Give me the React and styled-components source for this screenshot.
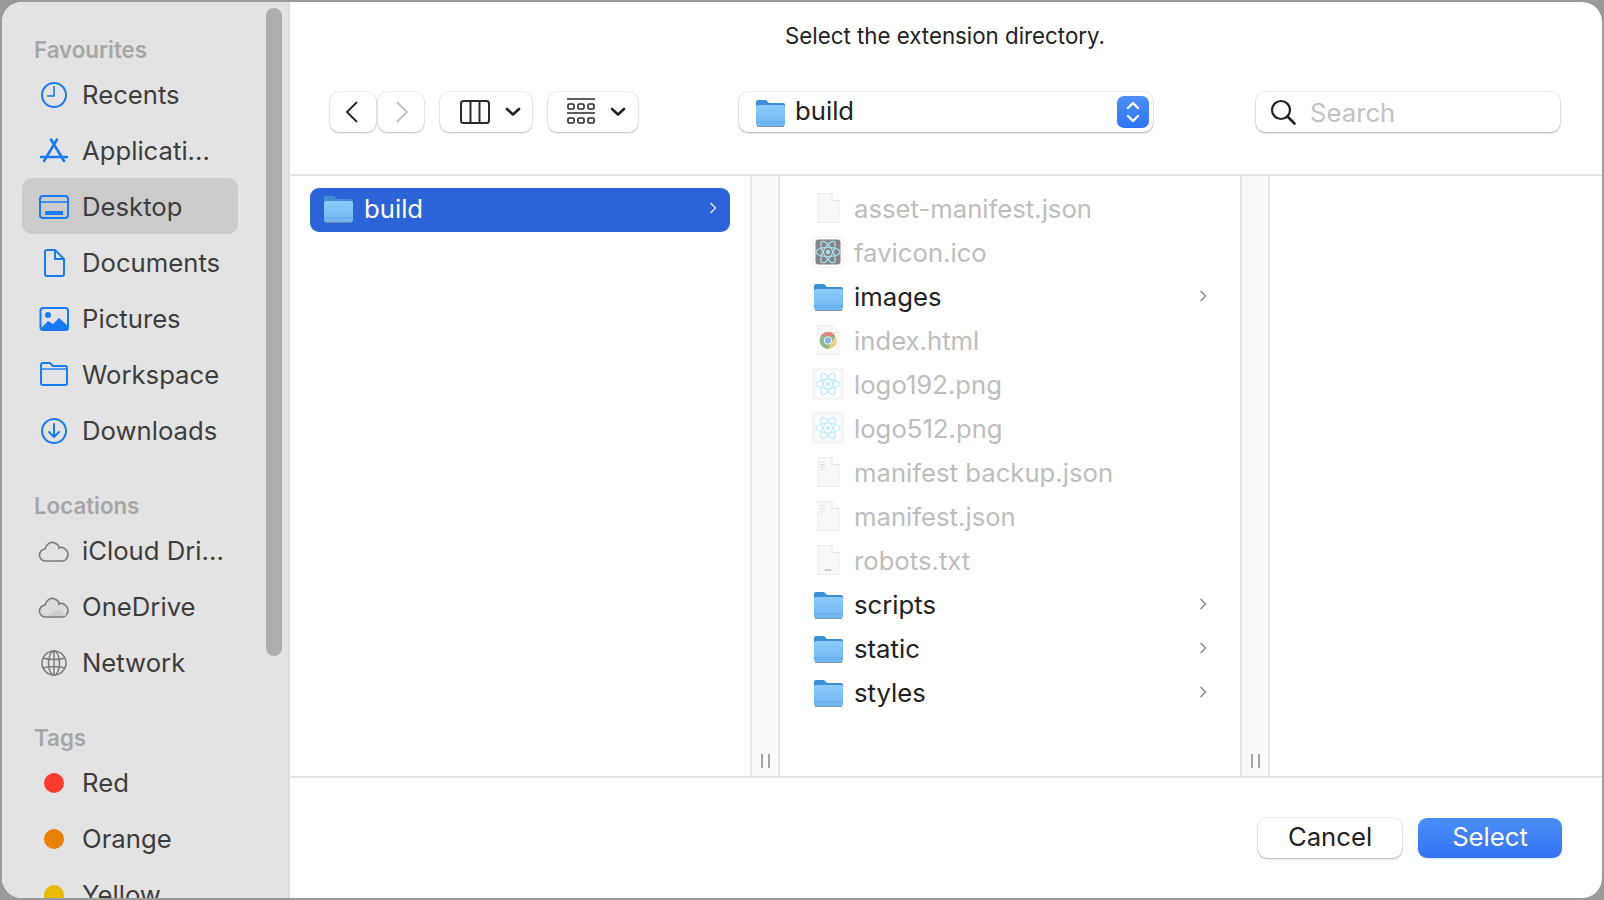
import React from 'react';
import styled, { createGlobalStyle } from 'styled-components';

const GlobalStyle = createGlobalStyle`
  html, body {
    margin: 0;
    padding: 0;
    background: #9a9a9a;
    overflow: hidden;
  }
  * { box-sizing: border-box; }
`;

const Desktop = styled.div`
  width: 1604px;
  height: 900px;
  padding: 2px;
  background: #9a9a9a;
  font-family: Inter, "Liberation Sans", sans-serif;
`;

const Dialog = styled.div`
  width: 1600px;
  height: 896px;
  display: flex;
  border-radius: 20px;
  overflow: hidden;
  background: #fff;
`;

const Sidebar = styled.aside`
  position: relative;
  width: 288px;
  flex: none;
  padding: 30px 0 0 20px;
  background: #e3e3e3;
  border-right: 2px solid #dcdcdc;
  overflow: hidden;
`;

const Scrollbar = styled.div`
  position: absolute;
  top: 6px;
  left: 264px;
  width: 16px;
  height: 648px;
  border-radius: 8px;
  background: #adadad;
`;

const SectionLabel = styled.div`
  height: 34px;
  margin-top: ${(p) => (p.$first ? 0 : 30)}px;
  padding-left: 12px;
  font-size: 22.3px;
  font-weight: 600;
  line-height: 36px;
  color: #a6a6a6;
`;

const SideRow = styled.div`
  width: 216px;
  height: 56px;
  display: flex;
  align-items: center;
  gap: 12px;
  padding-left: 16px;
  border-radius: 10px;
  background: ${(p) => (p.$active ? '#cbcbcb' : 'transparent')};
  font-size: 25.7px;
  color: #3d3d3d;
  white-space: nowrap;
`;

const SideIcon = styled.svg`
  width: 32px;
  height: 32px;
  margin-top: 2px;
  flex: none;
  display: block;
`;

const TagDot = styled.span`
  width: 20px;
  height: 20px;
  margin: 2px 6px 0;
  flex: none;
  border-radius: 50%;
  background: ${(p) => p.$color};
`;

const Main = styled.main`
  flex: 1;
  min-width: 0;
  display: flex;
  flex-direction: column;
`;

const Header = styled.header`
  height: 174px;
  flex: none;
  border-bottom: 2px solid #e5e5e5;
`;

const Title = styled.h1`
  margin: 0;
  height: 66px;
  padding-right: 2px;
  font-size: 22.3px;
  font-weight: 400;
  line-height: 68px;
  text-align: center;
  color: #222;
`;

const Toolbar = styled.div`
  display: flex;
  align-items: center;
  margin-top: 24px;
  padding-left: 40px;
`;

const ToolButton = styled.div`
  width: ${(p) => p.$w}px;
  height: 40px;
  margin-right: ${(p) => p.$mr || 0}px;
  flex: none;
  display: flex;
  align-items: center;
  justify-content: center;
  gap: ${(p) => p.$gap || 0}px;
  padding-left: ${(p) => p.$pl || 0}px;
  padding-right: ${(p) => p.$pr || 0}px;
  border-radius: 9px;
  background: #fff;
  box-shadow: 0 0 0 1px rgba(0, 0, 0, 0.05), 0 1px 2px rgba(0, 0, 0, 0.22);
`;

const PathPopup = styled.div`
  width: 414px;
  height: 40px;
  margin-right: 103px;
  flex: none;
  display: flex;
  align-items: center;
  padding: 0 4px 0 15px;
  border-radius: 9px;
  background: #fff;
  box-shadow: 0 0 0 1px rgba(0, 0, 0, 0.05), 0 1px 2px rgba(0, 0, 0, 0.28);
  font-size: 25.7px;
  color: #222;
`;

const PathName = styled.span`
  flex: 1;
  margin-left: 9px;
  padding-bottom: 2px;
  line-height: 36px;
`;

const Stepper = styled.div`
  width: 32px;
  height: 32px;
  display: flex;
  align-items: center;
  justify-content: center;
  border-radius: 7px;
  background: linear-gradient(#4c8ff8, #2f74f4);
`;

const SearchBox = styled.div`
  width: 304px;
  height: 40px;
  flex: none;
  display: flex;
  align-items: center;
  gap: 14px;
  padding-left: 14px;
  border-radius: 9px;
  background: #fff;
  box-shadow: 0 0 0 1px rgba(0, 0, 0, 0.05), 0 1px 2px rgba(0, 0, 0, 0.28);
  font-size: 25.7px;
  color: #c2c2c2;
`;

const Browser = styled.div`
  flex: 1;
  min-height: 0;
  display: grid;
  grid-template-columns: 460px 30px 460px 30px 1fr;
`;

const Column = styled.div`
  padding: 12px 20px 0;
`;

const Gutter = styled.div`
  display: flex;
  align-items: flex-end;
  justify-content: center;
  gap: 5px;
  padding-bottom: 8px;
  border-left: 2px solid #e8e8e8;
  border-right: 2px solid #e8e8e8;
  background: #fafafa;
`;

const GripLine = styled.span`
  width: 2px;
  height: 14px;
  background: #a3a3a3;
`;

const FileRow = styled.div`
  height: 44px;
  display: flex;
  align-items: center;
  gap: 10px;
  padding: 0 12px 4px;
  border-radius: 9px;
  background: ${(p) => (p.$selected ? '#2b63d9' : 'transparent')};
  color: ${(p) => (p.$selected ? '#fff' : p.$dim ? '#bdbdbd' : '#222')};
  font-size: 25.7px;
`;

const FileName = styled.span`
  flex: 1;
  white-space: nowrap;
`;

const FileIcon = styled.svg`
  width: 32px;
  height: 32px;
  flex: none;
  display: block;
`;

const Footer = styled.footer`
  height: 122px;
  flex: none;
  display: flex;
  justify-content: flex-end;
  gap: 16px;
  padding: 40px 40px 0 0;
  border-top: 2px solid #e5e5e5;
`;

const DialogButton = styled.div`
  width: 144px;
  height: 40px;
  display: flex;
  align-items: center;
  justify-content: center;
  padding-bottom: 4px;
  border-radius: 9px;
  font-size: 25.7px;
  color: ${(p) => (p.$primary ? '#fff' : '#222')};
  background: ${(p) => (p.$primary ? 'linear-gradient(#4b8ef8, #3374f5)' : '#fff')};
  box-shadow: ${(p) =>
    p.$primary
      ? '0 1px 2px rgba(51, 116, 245, 0.2)'
      : '0 0 0 1px rgba(0, 0, 0, 0.05), 0 1px 2px rgba(0, 0, 0, 0.28)'};
`;

const BLUE = '#1a7af5';

const sideIcons = {
  recents: (
    <g fill="none" stroke={BLUE} strokeWidth="2">
      <circle cx="16" cy="16" r="12" />
      <path d="M16 7v10H9" strokeWidth="1.6" />
    </g>
  ),
  apps: (
    <g fill="none" stroke={BLUE} strokeWidth="2.6" strokeLinecap="round">
      <path d="M13 4.500L26 26M19 4.500L6 26" />
      <path d="M3 22h26" />
    </g>
  ),
  desktop: (
    <g fill="none" stroke={BLUE} strokeWidth="2">
      <rect x="2" y="5" width="28" height="22" rx="3" />
      <path d="M2 11h28" strokeWidth="1.4" />
      <rect x="7" y="20" width="18" height="4" fill={BLUE} stroke="none" />
    </g>
  ),
  documents: (
    <g fill="none" stroke={BLUE} strokeWidth="2" strokeLinejoin="round">
      <path d="M9 3h8l9 9v15a2 2 0 0 1-2 2H9a2 2 0 0 1-2-2V5a2 2 0 0 1 2-2z" />
      <path d="M17 3v9h9" />
    </g>
  ),
  pictures: (
    <g>
      <rect x="2.500" y="5" width="27.500" height="22" rx="2.500" fill="none" stroke={BLUE} strokeWidth="2" />
      <circle cx="10" cy="12" r="3" fill={BLUE} />
      <path d="M3 25l7-7 5 3 6-6 9 8v4H3z" fill={BLUE} />
    </g>
  ),
  workspace: (
    <g fill="none" stroke={BLUE} strokeWidth="2" strokeLinejoin="round">
      <path d="M3 6a2 2 0 0 1 2-2h7l3 3h13a2 2 0 0 1 1 2v16a2 2 0 0 1-2 1H5a2 2 0 0 1-2-2z" />
      <path d="M3 10h26" strokeWidth="1.4" />
    </g>
  ),
  downloads: (
    <g fill="none" stroke={BLUE} strokeWidth="2" strokeLinecap="round" strokeLinejoin="round">
      <circle cx="16" cy="16" r="12" />
      <path d="M16 9v13M11 17l5 5 5-5" />
    </g>
  ),
  icloud: (
    <path
      d="M8 26a6 6 0 0 1-1-12c1-5 6-8 10-6 2 1 4 3 4 5 1-1 4-1 6 1 3 2 4 6 2 9-1 2-3 3-5 3z"
      fill="none"
      stroke="#7b7b7b"
      strokeWidth="1.6"
    />
  ),
  onedrive: (
    <g stroke="#7b7b7b" strokeWidth="1.6">
      <path d="M8 26a6 6 0 0 1-1-12c1-5 6-8 10-6 2 1 4 3 4 5 1-1 4-1 6 1 3 2 4 6 2 9-1 2-3 3-5 3z" fill="#dcdcdc" />
      <path d="M9 25l12-7 8 7z" fill="#cdcdcd" stroke="none" />
    </g>
  ),
  network: (
    <g fill="none" stroke="#7b7b7b" strokeWidth="1.5">
      <circle cx="16" cy="16" r="12" />
      <ellipse cx="16" cy="16" rx="5.500" ry="12" />
      <path d="M5 11c6 2 16 2 22 0M5 21c6-2 16-2 22 0M16 4v24" />
    </g>
  ),
};

const Folder = () => {
  const id = React.useId();
  return (
    <FileIcon viewBox="0 0 32 32">
      <defs>
        <linearGradient id={id} x1="0" y1="0" x2="0" y2="1">
          <stop offset="0" stopColor="#8bcbfa" />
          <stop offset="1" stopColor="#71b6f3" />
        </linearGradient>
      </defs>
      <path d="M2 6a2 2 0 0 1 2-2h8l3 3h14a2 2 0 0 1 2 2v6H2z" fill="#3f8fd8" />
      <path d="M2 11a2 2 0 0 1 2-2h25a2 2 0 0 1 2 2v17a2 2 0 0 1-2 2H4a2 2 0 0 1-2-2z" fill={`url(#${id})`} />
      <path d="M2 26h29" stroke="#63a9e6" strokeWidth="1" />
      <path d="M3 30.400h27" stroke="#6f8fa8" strokeWidth="1" />
    </FileIcon>
  );
};

const Page = ({ lines, label }) => (
  <FileIcon viewBox="0 0 32 32">
    <path d="M6 1.500h14l7 7v22H6z" fill="#f9f9f9" stroke="#ececec" strokeWidth="1" />
    <path d="M20 1.500v7h7" fill="#fff" stroke="#e4e4e4" strokeWidth="1" />
    {lines && <path d="M8 6h5M8 8.500h5M8 11h5M8 13.500h3" stroke="#dedede" strokeWidth="1" />}
    {label && <path d="M13 26h7" stroke="#aaa" strokeWidth="1.600" strokeDasharray="1.500 .7" />}
  </FileIcon>
);

const Atom = ({ stroke }) => (
  <g fill="none" stroke={stroke} strokeWidth="1.300">
    <ellipse cx="16" cy="16" rx="12" ry="4.600" />
    <ellipse cx="16" cy="16" rx="12" ry="4.600" transform="rotate(60 16 16)" />
    <ellipse cx="16" cy="16" rx="12" ry="4.600" transform="rotate(120 16 16)" />
    <circle cx="16" cy="16" r="2.200" fill={stroke} stroke="none" />
  </g>
);

const Favicon = () => (
  <FileIcon viewBox="0 0 32 32">
    <rect x="1" y="1" width="30" height="30" rx="1" fill="#fff" stroke="#eee" />
    <rect x="3.500" y="3.500" width="25" height="25" rx="3" fill="#858585" />
    <Atom stroke="#a9dcec" />
  </FileIcon>
);

const Logo = () => (
  <FileIcon viewBox="0 0 32 32">
    <rect x="1" y="1" width="30" height="30" fill="#fff" stroke="#eaeaea" />
    <rect x="3" y="3" width="26" height="26" fill="#fff" stroke="#f3f3f3" />
    <Atom stroke="#c4ecfa" />
  </FileIcon>
);

const ChromeDoc = () => (
  <FileIcon viewBox="0 0 32 32">
    <path d="M6 1.500h14l7 7v22H6z" fill="#fafafa" stroke="#ececec" strokeWidth="1" />
    <path d="M20 1.500v7h7" fill="#fff" stroke="#e4e4e4" strokeWidth="1" />
    <circle cx="16" cy="16.500" r="8.500" fill="#8dbb8e" />
    <path d="M8.600 12.300A8.500 8.500 0 0 1 23.400 12.300H16z" fill="#e0867c" />
    <path d="M23.400 12.300A8.500 8.500 0 0 1 16 25L19.500 18.500z" fill="#efd27f" />
    <circle cx="16" cy="16.500" r="4" fill="#fff" />
    <circle cx="16" cy="16.500" r="3.200" fill="#8eb0ee" />
  </FileIcon>
);

const Chevron = ({ color = '#8c8c8c' }) => (
  <svg width="10" height="14" viewBox="0 0 10 14" fill="none" stroke={color} strokeWidth="1.500">
    <path d="M2.500 2l5 5-5 5" />
  </svg>
);

const DownCaret = () => (
  <svg width="16" height="10" viewBox="0 0 16 10" fill="none" stroke="#222" strokeWidth="2.600" strokeLinecap="round" strokeLinejoin="round">
    <path d="M2 2l6 5.500L14 2" />
  </svg>
);

const favourites = [
  ['recents', 'Recents'],
  ['apps', 'Applicati...'],
  ['desktop', 'Desktop'],
  ['documents', 'Documents'],
  ['pictures', 'Pictures'],
  ['workspace', 'Workspace'],
  ['downloads', 'Downloads'],
];

const locations = [
  ['icloud', 'iCloud Dri...'],
  ['onedrive', 'OneDrive'],
  ['network', 'Network'],
];

const tags = [
  ['#ff3b30', 'Red'],
  ['#e98000', 'Orange'],
  ['#e9bb00', 'Yellow'],
];

const files = [
  { name: 'asset-manifest.json', icon: <Page />, dim: true },
  { name: 'favicon.ico', icon: <Favicon />, dim: true },
  { name: 'images', icon: <Folder />, folder: true },
  { name: 'index.html', icon: <ChromeDoc />, dim: true },
  { name: 'logo192.png', icon: <Logo />, dim: true },
  { name: 'logo512.png', icon: <Logo />, dim: true },
  { name: 'manifest backup.json', icon: <Page lines />, dim: true },
  { name: 'manifest.json', icon: <Page lines />, dim: true },
  { name: 'robots.txt', icon: <Page label />, dim: true },
  { name: 'scripts', icon: <Folder />, folder: true },
  { name: 'static', icon: <Folder />, folder: true },
  { name: 'styles', icon: <Folder />, folder: true },
];

const ColumnGutter = () => (
  <Gutter>
    <GripLine />
    <GripLine />
  </Gutter>
);

export default function App() {
  return (
    <Desktop>
      <GlobalStyle />
      <Dialog>
        <Sidebar>
          <SectionLabel $first>Favourites</SectionLabel>
          {favourites.map(([icon, label]) => (
            <SideRow key={icon} $active={icon === 'desktop'}>
              <SideIcon viewBox="0 0 32 32">{sideIcons[icon]}</SideIcon>
              {label}
            </SideRow>
          ))}
          <SectionLabel>Locations</SectionLabel>
          {locations.map(([icon, label]) => (
            <SideRow key={icon}>
              <SideIcon viewBox="0 0 32 32">{sideIcons[icon]}</SideIcon>
              {label}
            </SideRow>
          ))}
          <SectionLabel>Tags</SectionLabel>
          {tags.map(([color, label]) => (
            <SideRow key={label}>
              <TagDot $color={color} />
              {label}
            </SideRow>
          ))}
          <Scrollbar />
        </Sidebar>
        <Main>
          <Header>
            <Title>Select the extension directory.</Title>
            <Toolbar>
              <ToolButton $w={46} $mr={2} $pr={2}>
                <svg width="16" height="24" viewBox="0 0 16 24" fill="none" stroke="#2a2a2a" strokeWidth="2">
                  <path d="M13 2L3 12l10 10" />
                </svg>
              </ToolButton>
              <ToolButton $w={46} $mr={16} $pl={1}>
                <svg width="16" height="24" viewBox="0 0 16 24" fill="none" stroke="#c4c4c4" strokeWidth="2">
                  <path d="M3 2l10 10L3 22" />
                </svg>
              </ToolButton>
              <ToolButton $w={92} $mr={16} $gap={15} $pl={8}>
                <svg width="30" height="24" viewBox="0 0 30 24" fill="none" stroke="#2a2a2a" strokeWidth="2">
                  <rect x="1" y="1" width="28" height="22" rx="2.500" />
                  <path d="M10.500 1v22M19.500 1v22" />
                </svg>
                <DownCaret />
              </ToolButton>
              <ToolButton $w={90} $mr={101} $gap={15} $pl={7}>
                <svg width="28" height="28" viewBox="0 0 28 28" fill="none" stroke="#2a2a2a" strokeWidth="1.600">
                  <path d="M0 1h28M0 15h28" />
                  <rect x="1" y="6" width="6" height="5" rx="1.200" />
                  <rect x="11" y="6" width="6" height="5" rx="1.200" />
                  <rect x="21" y="6" width="6" height="5" rx="1.200" />
                  <rect x="1" y="20" width="6" height="5" rx="1.200" />
                  <rect x="11" y="20" width="6" height="5" rx="1.200" />
                  <rect x="21" y="20" width="6" height="5" rx="1.200" />
                </svg>
                <DownCaret />
              </ToolButton>
              <PathPopup>
                <Folder />
                <PathName>build</PathName>
                <Stepper>
                  <svg width="16" height="24" viewBox="0 0 16 24" fill="none" stroke="#fff" strokeWidth="2.400" strokeLinecap="round" strokeLinejoin="round">
                    <path d="M3 8l5-5 5 5M3 16l5 5 5-5" />
                  </svg>
                </Stepper>
              </PathPopup>
              <SearchBox>
                <svg width="26" height="26" viewBox="0 0 26 26" fill="none" stroke="#222" strokeWidth="2.200" strokeLinecap="round">
                  <circle cx="11" cy="11" r="9" />
                  <path d="M17.500 17.500l7 7" strokeWidth="2.600" />
                </svg>
                Search
              </SearchBox>
            </Toolbar>
          </Header>
          <Browser>
            <Column>
              <FileRow $selected>
                <Folder />
                <FileName>build</FileName>
                <Chevron color="#dbe5fa" />
              </FileRow>
            </Column>
            <ColumnGutter />
            <Column>
              {files.map((f) => (
                <FileRow key={f.name} $dim={f.dim}>
                  {f.icon}
                  <FileName>{f.name}</FileName>
                  {f.folder && <Chevron />}
                </FileRow>
              ))}
            </Column>
            <ColumnGutter />
            <Column />
          </Browser>
          <Footer>
            <DialogButton>Cancel</DialogButton>
            <DialogButton $primary>Select</DialogButton>
          </Footer>
        </Main>
      </Dialog>
    </Desktop>
  );
}
